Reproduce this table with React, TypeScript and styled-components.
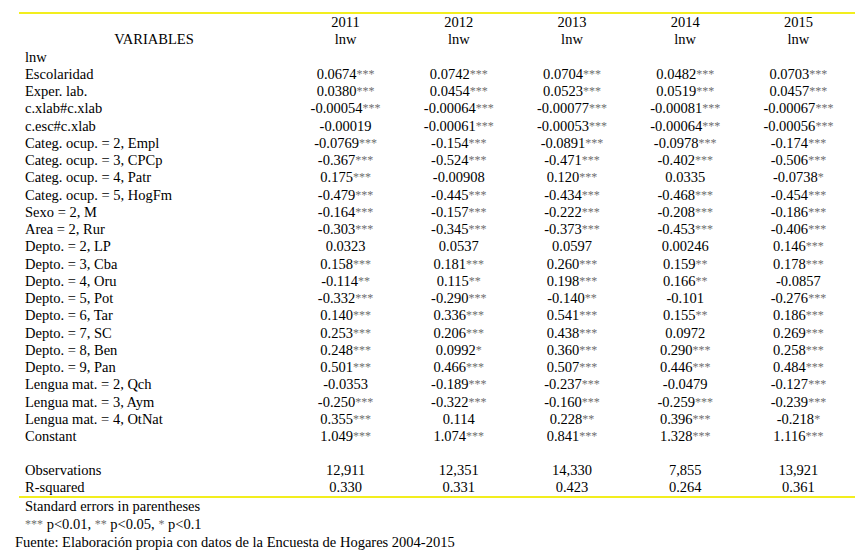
import React from "react";
import styled, { createGlobalStyle } from "styled-components";

const Global = createGlobalStyle`
  html, body { margin: 0; padding: 0; background: #ffffff; }
  body { font-family: "Liberation Serif", "DejaVu Serif", serif; color: #000000; }
`;

const Page = styled.div`
  width: 862px;
  height: 557px;
  padding-top: 12px;
  box-sizing: border-box;
  font-family: "Liberation Serif", "DejaVu Serif", serif;
  font-size: 14.5px;
  color: #000000;
`;

const Table = styled.div`
  margin-left: 19px;
  width: 836px;
  border-top: 2px solid #f2ee1e;
  display: grid;
  grid-template-columns: 270px repeat(5, 1fr);
`;

const Cell = styled.div<{ $h?: number }>`
  height: ${(p) => p.$h ?? 17.25}px;
  line-height: ${(p) => p.$h ?? 17.25}px;
  white-space: nowrap;
  text-align: center;
`;

const Label = styled(Cell)`
  text-align: left;
  padding-left: 6px;
`;

const HeadLabel = styled(Cell)`
  text-align: center;
`;

const Stars = styled.span`
  font-size: 12px;
  color: #6e6e6e;
  vertical-align: 1px;
`;

const Rule = styled.div`
  grid-column: 1 / -1;
  height: 2px;
  background: #f2ee1e;
`;

const Notes = styled.div`
  margin-left: 25px;
  line-height: 17.25px;
`;

const Source = styled.div`
  margin-left: 15px;
  line-height: 19px;
`;

const years = ["2011", "2012", "2013", "2014", "2015"];

type Row = [string, string[]];

const rows: Row[] = [
  ["Escolaridad", ["0.0674***", "0.0742***", "0.0704***", "0.0482***", "0.0703***"]],
  ["Exper. lab.", ["0.0380***", "0.0454***", "0.0523***", "0.0519***", "0.0457***"]],
  ["c.xlab#c.xlab", ["-0.00054***", "-0.00064***", "-0.00077***", "-0.00081***", "-0.00067***"]],
  ["c.esc#c.xlab", ["-0.00019", "-0.00061***", "-0.00053***", "-0.00064***", "-0.00056***"]],
  ["Categ. ocup. = 2, Empl", ["-0.0769***", "-0.154***", "-0.0891***", "-0.0978***", "-0.174***"]],
  ["Categ. ocup. = 3, CPCp", ["-0.367***", "-0.524***", "-0.471***", "-0.402***", "-0.506***"]],
  ["Categ. ocup. = 4, Patr", ["0.175***", "-0.00908", "0.120***", "0.0335", "-0.0738*"]],
  ["Categ. ocup. = 5, HogFm", ["-0.479***", "-0.445***", "-0.434***", "-0.468***", "-0.454***"]],
  ["Sexo = 2, M", ["-0.164***", "-0.157***", "-0.222***", "-0.208***", "-0.186***"]],
  ["Area = 2, Rur", ["-0.303***", "-0.345***", "-0.373***", "-0.453***", "-0.406***"]],
  ["Depto. = 2, LP", ["0.0323", "0.0537", "0.0597", "0.00246", "0.146***"]],
  ["Depto. = 3, Cba", ["0.158***", "0.181***", "0.260***", "0.159**", "0.178***"]],
  ["Depto. = 4, Oru", ["-0.114**", "0.115**", "0.198***", "0.166**", "-0.0857"]],
  ["Depto. = 5, Pot", ["-0.332***", "-0.290***", "-0.140**", "-0.101", "-0.276***"]],
  ["Depto. = 6, Tar", ["0.140***", "0.336***", "0.541***", "0.155**", "0.186***"]],
  ["Depto. = 7, SC", ["0.253***", "0.206***", "0.438***", "0.0972", "0.269***"]],
  ["Depto. = 8, Ben", ["0.248***", "0.0992*", "0.360***", "0.290***", "0.258***"]],
  ["Depto. = 9, Pan", ["0.501***", "0.466***", "0.507***", "0.446***", "0.484***"]],
  ["Lengua mat. = 2, Qch", ["-0.0353", "-0.189***", "-0.237***", "-0.0479", "-0.127***"]],
  ["Lengua mat. = 3, Aym", ["-0.250***", "-0.322***", "-0.160***", "-0.259***", "-0.239***"]],
  ["Lengua mat. = 4, OtNat", ["0.355***", "0.114", "0.228**", "0.396***", "-0.218*"]],
  ["Constant", ["1.049***", "1.074***", "0.841***", "1.328***", "1.116***"]],
];

const stats: Row[] = [
  ["Observations", ["12,911", "12,351", "14,330", "7,855", "13,921"]],
  ["R-squared", ["0.330", "0.331", "0.423", "0.264", "0.361"]],
];

function Value({ v }: { v: string }) {
  const m = v.match(/^([^*]*)(\**)$/);
  const num = m ? m[1] : v;
  const st = m ? m[2] : "";
  return (
    <Cell>
      {num}
      {st && <Stars>{st}</Stars>}
    </Cell>
  );
}

export default function App() {
  return (
    <Page>
      <Global />
      <Table>
        <Cell />
        {years.map((y) => (
          <Cell key={y}>{y}</Cell>
        ))}
        <HeadLabel>VARIABLES</HeadLabel>
        {years.map((y) => (
          <Cell key={y}>lnw</Cell>
        ))}
        <Label>lnw</Label>
        {years.map((y) => (
          <Cell key={y} />
        ))}
        {rows.map(([label, vals]) => (
          <React.Fragment key={label}>
            <Label>{label}</Label>
            {vals.map((v, i) => (
              <Value key={i} v={v} />
            ))}
          </React.Fragment>
        ))}
        <Label $h={16.5} />
        {years.map((y) => (
          <Cell key={y} $h={16.5} />
        ))}
        {stats.map(([label, vals]) => (
          <React.Fragment key={label}>
            <Label>{label}</Label>
            {vals.map((v, i) => (
              <Value key={i} v={v} />
            ))}
          </React.Fragment>
        ))}
        <Rule />
      </Table>
      <Notes>
        <div>Standard errors in parentheses</div>
        <div>
          <Stars>***</Stars> p&lt;0.01, <Stars>**</Stars> p&lt;0.05, <Stars>*</Stars> p&lt;0.1
        </div>
      </Notes>
      <Source>Fuente: Elaboración propia con datos de la Encuesta de Hogares 2004-2015</Source>
    </Page>
  );
}
